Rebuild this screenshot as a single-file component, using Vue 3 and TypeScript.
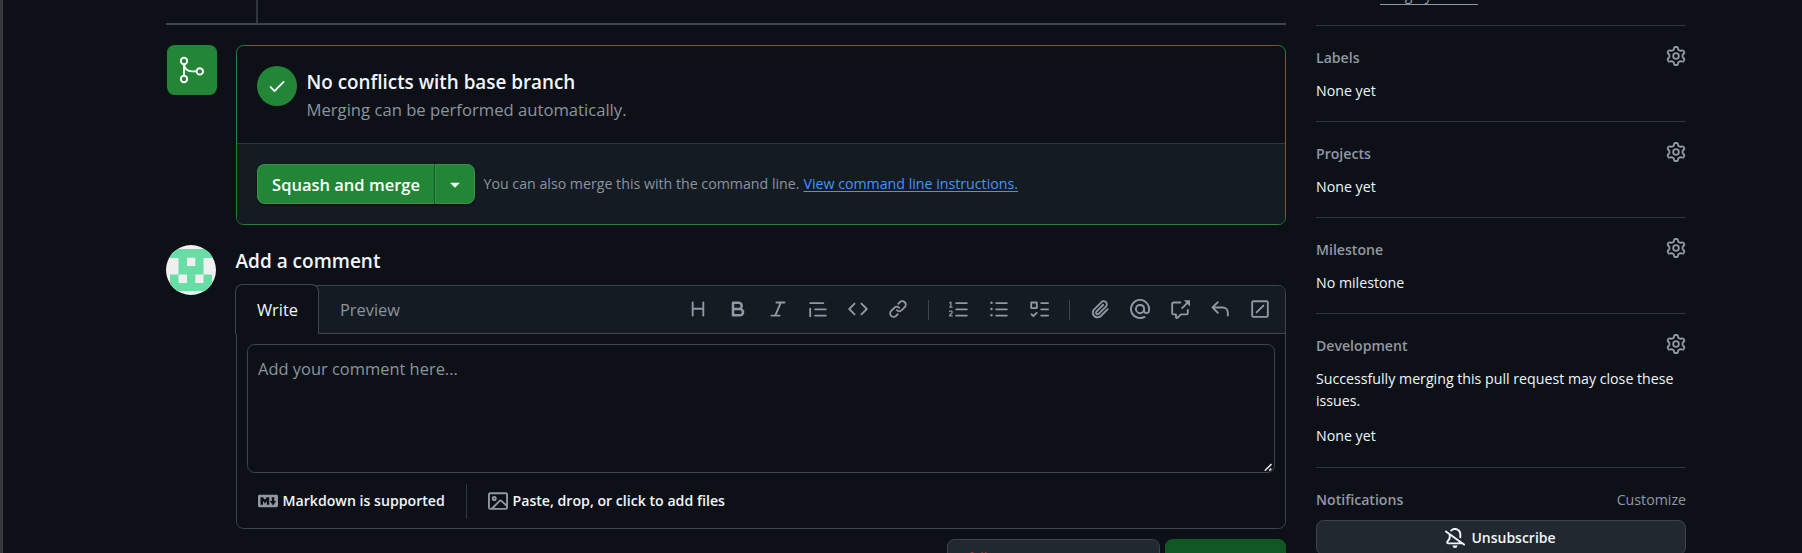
<script setup lang="ts">
interface Section {
  title: string
  lines: string[]
}

const tools: string[][] = [
  [
    'M3.75 2a.75.75 0 0 1 .75.75V7h7V2.75a.75.75 0 0 1 1.5 0v10.5a.75.75 0 0 1-1.5 0V8.5h-7v4.75a.75.75 0 0 1-1.5 0V2.75A.75.75 0 0 1 3.75 2Z',
    'M4 2h4.5a3.501 3.501 0 0 1 2.852 5.53A3.499 3.499 0 0 1 9.5 14H4a1 1 0 0 1-1-1V3a1 1 0 0 1 1-1Zm1 7v3h4.5a1.5 1.5 0 0 0 0-3Zm3.5-2a1.5 1.5 0 0 0 0-3H5v3Z',
    'M6 2.75A.75.75 0 0 1 6.75 2h6.5a.75.75 0 0 1 0 1.5h-2.505l-3.858 9H9.25a.75.75 0 0 1 0 1.5h-6.5a.75.75 0 0 1 0-1.5h2.505l3.858-9H6.75A.75.75 0 0 1 6 2.75Z',
    'M1.75 2.5h10.5a.75.75 0 0 1 0 1.5H1.75a.75.75 0 0 1 0-1.5Zm4 5h8.5a.75.75 0 0 1 0 1.5h-8.5a.75.75 0 0 1 0-1.5Zm0 5h8.5a.75.75 0 0 1 0 1.5h-8.5a.75.75 0 0 1 0-1.5ZM2.5 7.75v6a.75.75 0 0 1-1.5 0v-6a.75.75 0 0 1 1.5 0Z',
    'm11.28 3.22 4.25 4.25a.75.75 0 0 1 0 1.06l-4.25 4.25a.749.749 0 0 1-1.275-.326.749.749 0 0 1 .215-.734L13.94 8l-3.72-3.72a.749.749 0 0 1 .326-1.275.749.749 0 0 1 .734.215Zm-6.56 0a.751.751 0 0 1 1.042.018.751.751 0 0 1 .018 1.042L2.06 8l3.72 3.72a.749.749 0 0 1-.326 1.275.749.749 0 0 1-.734-.215L.47 8.53a.75.75 0 0 1 0-1.06Z',
    'm7.775 3.275 1.25-1.25a3.5 3.5 0 1 1 4.95 4.95l-2.5 2.5a3.5 3.5 0 0 1-4.95 0 .751.751 0 0 1 .018-1.042.751.751 0 0 1 1.042-.018 1.998 1.998 0 0 0 2.83 0l2.5-2.5a2.002 2.002 0 0 0-2.83-2.83l-1.25 1.25a.751.751 0 0 1-1.042-.018.751.751 0 0 1-.018-1.042Zm-4.69 9.64a1.998 1.998 0 0 0 2.83 0l1.25-1.25a.751.751 0 0 1 1.042.018.751.751 0 0 1 .018 1.042l-1.25 1.25a3.5 3.5 0 1 1-4.95-4.95l2.5-2.5a3.5 3.5 0 0 1 4.95 0 .751.751 0 0 1-.018 1.042.751.751 0 0 1-1.042.018 1.998 1.998 0 0 0-2.83 0l-2.5 2.5a1.998 1.998 0 0 0 0 2.83Z',
  ],
  [
    'M5 3.25a.75.75 0 0 1 .75-.75h8.5a.75.75 0 0 1 0 1.5h-8.5A.75.75 0 0 1 5 3.25Zm0 5a.75.75 0 0 1 .75-.75h8.5a.75.75 0 0 1 0 1.5h-8.5A.75.75 0 0 1 5 8.25Zm0 5a.75.75 0 0 1 .75-.75h8.5a.75.75 0 0 1 0 1.5h-8.5a.75.75 0 0 1-.75-.75ZM.924 10.32a.5.5 0 0 1-.851-.525l.001-.001.001-.002.002-.004.007-.011c.097-.144.215-.273.348-.384.228-.19.588-.392 1.068-.392.468 0 .858.181 1.126.484.259.294.377.673.377 1.038 0 .987-.686 1.495-1.156 1.845l-.047.035c-.303.225-.522.4-.654.597h1.357a.5.5 0 0 1 0 1H.5a.5.5 0 0 1-.5-.5c0-1.005.692-1.52 1.167-1.875l.035-.025c.531-.396.8-.625.8-1.078a.57.57 0 0 0-.128-.376C1.806 10.068 1.695 10 1.5 10a.658.658 0 0 0-.429.163.835.835 0 0 0-.144.153ZM2.003 2.5V6h.503a.5.5 0 0 1 0 1H.5a.5.5 0 0 1 0-1h.503V3.308l-.28.14a.5.5 0 0 1-.446-.895l1.003-.5a.5.5 0 0 1 .723.447Z',
    'M5.75 2.5h8.5a.75.75 0 0 1 0 1.5h-8.5a.75.75 0 0 1 0-1.5Zm0 5h8.5a.75.75 0 0 1 0 1.5h-8.5a.75.75 0 0 1 0-1.5Zm0 5h8.5a.75.75 0 0 1 0 1.5h-8.5a.75.75 0 0 1 0-1.5ZM2 14a1 1 0 1 1 0-2 1 1 0 0 1 0 2Zm1-6a1 1 0 1 1-2 0 1 1 0 0 1 2 0ZM2 4a1 1 0 1 1 0-2 1 1 0 0 1 0 2Z',
    'M2 2h4a1 1 0 0 1 1 1v4a1 1 0 0 1-1 1H2a1 1 0 0 1-1-1V3a1 1 0 0 1 1-1Zm4.655 8.595a.75.75 0 0 1 0 1.06L4.03 14.28a.75.75 0 0 1-1.06 0l-1.5-1.5a.749.749 0 0 1 .326-1.275.749.749 0 0 1 .734.215l.97.97 2.095-2.095a.75.75 0 0 1 1.06 0ZM9.75 2.5h5.5a.75.75 0 0 1 0 1.5h-5.5a.75.75 0 0 1 0-1.5Zm0 5h5.5a.75.75 0 0 1 0 1.5h-5.5a.75.75 0 0 1 0-1.5Zm0 5h5.5a.75.75 0 0 1 0 1.5h-5.5a.75.75 0 0 1 0-1.5Zm-7.25-9v3h3v-3Z',
  ],
  [
    'M12.212 3.02a1.753 1.753 0 0 0-2.478.003l-5.83 5.83a3.007 3.007 0 0 0-.88 2.127c0 .795.315 1.551.88 2.116.567.567 1.333.89 2.126.89.79 0 1.548-.321 2.116-.89l5.48-5.48a.75.75 0 0 1 1.061 1.06l-5.48 5.48a4.492 4.492 0 0 1-3.177 1.33c-1.2 0-2.345-.487-3.187-1.33a4.483 4.483 0 0 1-1.32-3.177c0-1.195.475-2.341 1.32-3.186l5.83-5.83a3.25 3.25 0 0 1 5.553 2.297c0 .863-.343 1.691-.953 2.301L7.439 12.39c-.375.377-.884.59-1.416.593a1.998 1.998 0 0 1-1.412-.593 1.992 1.992 0 0 1 0-2.828l5.48-5.48a.751.751 0 0 1 1.042.018.751.751 0 0 1 .018 1.042l-5.48 5.48a.492.492 0 0 0 0 .707.499.499 0 0 0 .352.154.51.51 0 0 0 .356-.154l5.833-5.827a1.755 1.755 0 0 0 0-2.481Z',
    'M4.75 2.37a6.501 6.501 0 0 0 6.5 11.26.75.75 0 0 1 .75 1.298A7.999 7.999 0 0 1 .989 4.148 8 8 0 0 1 16 7.75v1.5a2.75 2.75 0 0 1-5.072 1.475 3.999 3.999 0 0 1-6.65-4.19A4 4 0 0 1 12 8v1.25a1.25 1.25 0 0 0 2.5 0V7.867a6.5 6.5 0 0 0-9.75-5.496ZM10.5 8a2.5 2.5 0 1 0-5 0 2.5 2.5 0 0 0 5 0Z',
    'M2.75 3.5a.25.25 0 0 0-.25.25v7.5c0 .138.112.25.25.25h2a.75.75 0 0 1 .75.75v2.19l2.72-2.72a.749.749 0 0 1 .53-.22h4.5a.25.25 0 0 0 .25-.25v-2.5a.75.75 0 0 1 1.5 0v2.5A1.75 1.75 0 0 1 13.25 13H9.06l-2.573 2.573A1.458 1.458 0 0 1 4 14.543V13H2.75A1.75 1.75 0 0 1 1 11.25v-7.5C1 2.784 1.784 2 2.75 2h5.5a.75.75 0 0 1 0 1.5ZM16 1.25v4.146a.25.25 0 0 1-.427.177L14.03 4.03l-3.75 3.75a.749.749 0 0 1-1.275-.326.749.749 0 0 1 .215-.734l3.75-3.75-1.543-1.543A.25.25 0 0 1 11.604 1h4.146a.25.25 0 0 1 .25.25Z',
    'M6.78 1.97a.75.75 0 0 1 0 1.06L3.81 6h6.44A4.75 4.75 0 0 1 15 10.75v2.5a.75.75 0 0 1-1.5 0v-2.5a3.25 3.25 0 0 0-3.25-3.25H3.81l2.97 2.97a.749.749 0 0 1-.326 1.275.749.749 0 0 1-.734-.215L1.47 7.28a.75.75 0 0 1 0-1.06l4.25-4.25a.75.75 0 0 1 1.06 0Z',
    'M13.25 1c.966 0 1.75.784 1.75 1.75v10.5A1.75 1.75 0 0 1 13.25 15H2.75A1.75 1.75 0 0 1 1 13.25V2.75C1 1.784 1.784 1 2.75 1ZM2.75 2.5a.25.25 0 0 0-.25.25v10.5c0 .138.112.25.25.25h10.5a.25.25 0 0 0 .25-.25V2.75a.25.25 0 0 0-.25-.25Zm8.53 3.28-5.5 5.5a.75.75 0 0 1-1.06-1.06l5.5-5.5a.75.75 0 0 1 1.06 1.06Z',
  ],
]

const gear =
  'M8 0a8.2 8.2 0 0 1 .701.031C9.444.095 9.99.645 10.16 1.29l.288 1.107c.018.066.079.158.212.224.231.114.454.243.668.386.123.082.233.09.299.071l1.103-.303c.644-.176 1.392.021 1.82.63.27.385.506.792.704 1.218.315.675.111 1.422-.364 1.891l-.814.806c-.049.048-.098.147-.088.294.016.257.016.515 0 .772-.01.147.038.246.088.294l.814.806c.475.469.679 1.216.364 1.891a7.977 7.977 0 0 1-.704 1.217c-.428.61-1.176.807-1.82.63l-1.102-.302c-.067-.019-.177-.011-.3.071a5.909 5.909 0 0 1-.668.386c-.133.066-.194.158-.211.224l-.29 1.106c-.168.646-.715 1.196-1.458 1.26a8.006 8.006 0 0 1-1.402 0c-.743-.064-1.289-.614-1.458-1.26l-.289-1.106c-.018-.066-.079-.158-.212-.224a5.738 5.738 0 0 1-.668-.386c-.123-.082-.233-.09-.299-.071l-1.103.303c-.644.176-1.392-.021-1.82-.63a8.12 8.12 0 0 1-.704-1.218c-.315-.675-.111-1.422.363-1.891l.815-.806c.05-.048.098-.147.088-.294a6.214 6.214 0 0 1 0-.772c.01-.147-.038-.246-.088-.294l-.815-.806C.635 6.045.431 5.298.746 4.623a7.92 7.92 0 0 1 .704-1.217c.428-.61 1.176-.807 1.82-.63l1.102.302c.067.019.177.011.3-.071.214-.143.437-.272.668-.386.133-.066.194-.158.211-.224l.29-1.106C6.009.645 6.556.095 7.299.03 7.53.01 7.764 0 8 0Zm-.571 1.525c-.036.003-.108.036-.137.146l-.289 1.105c-.147.561-.549.967-.998 1.189-.173.086-.34.183-.5.29-.417.278-.97.423-1.529.27l-1.103-.303c-.109-.03-.175.016-.195.045-.22.312-.412.644-.573.99-.014.031-.021.11.059.19l.815.806c.411.406.562.957.53 1.456a4.709 4.709 0 0 0 0 .582c.032.499-.119 1.05-.53 1.456l-.815.806c-.081.08-.073.159-.059.19.162.346.353.677.573.989.02.03.085.076.195.046l1.102-.303c.56-.153 1.113-.008 1.53.27.161.107.328.204.501.29.447.222.85.629.997 1.189l.289 1.105c.029.109.101.143.137.146a6.6 6.6 0 0 0 1.142 0c.036-.003.108-.036.137-.146l.289-1.105c.147-.561.549-.967.998-1.189.173-.086.34-.183.5-.29.417-.278.97-.423 1.529-.27l1.103.303c.109.029.175-.016.195-.045.22-.313.411-.644.573-.99.014-.031.021-.11-.059-.19l-.815-.806c-.411-.406-.562-.957-.53-1.456a4.709 4.709 0 0 0 0-.582c-.032-.499.119-1.05.53-1.456l.815-.806c.081-.08.073-.159.059-.19a6.464 6.464 0 0 0-.573-.989c-.02-.03-.085-.076-.195-.046l-1.102.303c-.56.153-1.113.008-1.53-.27a4.44 4.44 0 0 0-.501-.29c-.447-.222-.85-.629-.997-1.189l-.289-1.105c-.029-.11-.101-.143-.137-.146a6.6 6.6 0 0 0-1.142 0ZM11 8a3 3 0 1 1-6 0 3 3 0 0 1 6 0ZM9.5 8a1.5 1.5 0 1 0-3.001.001A1.5 1.5 0 0 0 9.5 8Z'

const sections: Section[] = [
  { title: 'Labels', lines: ['None yet'] },
  { title: 'Projects', lines: ['None yet'] },
  { title: 'Milestone', lines: ['No milestone'] },
  {
    title: 'Development',
    lines: ['Successfully merging this pull request may close these issues.', 'None yet'],
  },
]
</script>

<template>
  <div class="page">
    <main class="main">
      <div class="timeline-end"></div>

      <section class="row merge-row">
        <div class="merge-badge">
          <svg width="30" height="30" viewBox="0 0 30 30" fill="none" stroke="#fff" stroke-width="1.9">
            <circle cx="7" cy="6" r="3.2" />
            <circle cx="7" cy="24" r="3.2" />
            <circle cx="22.8" cy="16.4" r="3.2" />
            <path d="M7 9.2V20.8M7 9.2c.6 4.6 3.6 7.2 8 7.2h4.6" />
          </svg>
        </div>
        <div class="merge-box">
          <div class="merge-status">
            <div class="ok">
              <svg class="icon" viewBox="0 0 16 16"><path d="M13.78 4.22a.75.75 0 0 1 0 1.06l-7.25 7.25a.75.75 0 0 1-1.06 0L2.22 9.28a.751.751 0 0 1 .018-1.042.751.751 0 0 1 1.042-.018L6 10.94l6.72-6.72a.75.75 0 0 1 1.06 0Z" /></svg>
            </div>
            <div>
              <h3 class="status-title">No conflicts with base branch</h3>
              <p class="status-sub">Merging can be performed automatically.</p>
            </div>
          </div>
          <div class="merge-actions">
            <div class="btn-group">
              <button class="btn-merge" type="button"><span>Squash and merge</span></button>
              <button class="btn-caret" type="button">
                <svg class="icon" viewBox="0 0 16 16"><path d="m4.427 7.427 3.396 3.396a.25.25 0 0 0 .354 0l3.396-3.396A.25.25 0 0 0 11.396 7H4.604a.25.25 0 0 0-.177.427Z" /></svg>
              </button>
            </div>
            <p class="hint"><span>You can also merge this with the command line.</span><a class="hint-link">View command line instructions.</a></p>
          </div>
        </div>
      </section>

      <section class="row comment-row">
        <svg class="avatar" width="50" height="50" viewBox="0 0 50 50">
          <defs><clipPath id="round"><circle cx="25" cy="25" r="25" /></clipPath></defs>
          <g clip-path="url(#round)">
            <rect width="50" height="50" fill="#f0f0f0" />
            <path fill="#68dda5" d="M4 4h42v9H4zM12.5 12.8h25v17h-25zM4 29.5h42V46H4z" />
            <path fill="#f0f0f0" d="M21 12.8h8.3v8.3H21zM12.5 29.5H21V38h-8.5zM29.3 29.5h8.2V38h-8.2z" />
          </g>
        </svg>
        <div class="comment">
          <h3 class="comment-title">Add a comment</h3>
          <div class="editor">
            <div class="tabs">
              <div class="tab-write"><span>Write</span></div>
              <div class="tab-preview"><span>Preview</span></div>
              <div class="toolbar">
                <template v-for="(group, g) in tools" :key="g">
                  <i v-if="g > 0" class="sep"></i>
                  <span v-for="(d, i) in group" :key="i" class="tool">
                    <svg class="icon" viewBox="0 0 16 16"><path :d="d" /></svg>
                  </span>
                </template>
              </div>
            </div>
            <div class="input">
              <span>Add your comment here...</span>
              <svg class="grip" width="9" height="9" viewBox="0 0 9 9" stroke="#e6e6e6" stroke-width="1.5"><path d="M.8 7.8 7.5 1.1M5.3 7.6l2-2" /></svg>
            </div>
            <div class="editor-foot">
              <svg class="icon" viewBox="0 0 16 16"><path d="M14.85 3c.63 0 1.15.52 1.14 1.15v7.7c0 .63-.51 1.15-1.15 1.15H1.15C.52 13 0 12.48 0 11.84V4.15C0 3.52.52 3 1.15 3ZM9 11V5H7L5.5 7 4 5H2v6h2V8l1.5 1.92L7 8v3Zm2.99.5L14.5 8H13V5h-2v3H9.5Z" /></svg>
              <span class="foot-md">Markdown is supported</span>
              <i class="foot-sep"></i>
              <svg class="icon" viewBox="0 0 16 16"><path d="M16 13.25A1.75 1.75 0 0 1 14.25 15H1.75A1.75 1.75 0 0 1 0 13.25V2.75C0 1.784.784 1 1.75 1h12.5c.966 0 1.75.784 1.75 1.75ZM1.75 2.5a.25.25 0 0 0-.25.25v10.5c0 .138.112.25.25.25h.94l.03-.03 6.077-6.078a1.75 1.75 0 0 1 2.412-.06L14.5 10.31V2.75a.25.25 0 0 0-.25-.25Zm12.5 11a.25.25 0 0 0 .25-.25v-.917l-4.298-3.889a.25.25 0 0 0-.344.009L4.81 13.5ZM7 6a2 2 0 1 1-3.999.001A2 2 0 0 1 7 6ZM5.5 6a.5.5 0 1 0-1 0 .5.5 0 0 0 1 0Z" /></svg>
              <span>Paste, drop, or click to add files</span>
            </div>
          </div>
          <div class="form-actions">
            <button class="btn-close" type="button">
              <svg class="icon" viewBox="0 0 16 16"><path d="M3.25 1A2.25 2.25 0 0 1 4 5.372v5.256a2.251 2.251 0 1 1-1.5 0V5.372A2.251 2.251 0 0 1 3.25 1Zm9.5 5.5a.75.75 0 0 1 .75.75v3.378a2.251 2.251 0 1 1-1.5 0V7.25a.75.75 0 0 1 .75-.75Zm-2.03-5.273a.75.75 0 0 1 1.06 0l.97.97.97-.97a.75.75 0 1 1 1.06 1.06l-.97.97.97.97a.75.75 0 0 1-1.06 1.06l-.97-.97-.97.97a.75.75 0 0 1-1.06-1.06l.97-.97-.97-.97a.75.75 0 0 1 0-1.06Z" /></svg>
            </button>
            <button class="btn-comment" type="button"></button>
          </div>
        </div>
      </section>
    </main>

    <aside class="side">
      <div class="assignees"><span class="assign-link">assign yourself</span></div>
      <section v-for="s in sections" :key="s.title" class="side-item">
        <header class="side-head">
          <span class="side-title">{{ s.title }}</span>
          <svg class="icon" viewBox="0 0 16 16"><path :d="gear" /></svg>
        </header>
        <p v-for="line in s.lines" :key="line" class="side-text">{{ line }}</p>
      </section>
      <section class="side-item notifications">
        <header class="side-head">
          <span class="side-title">Notifications</span>
          <span class="customize">Customize</span>
        </header>
        <button class="btn-unsub" type="button">
          <svg class="icon" viewBox="0 0 16 16"><path d="m4.182 4.31.016.011 10.104 7.316.013.01 1.375.996a.75.75 0 1 1-.88 1.214L13.626 13H2.518a1.516 1.516 0 0 1-1.263-2.36l1.703-2.554A.255.255 0 0 0 3 7.947V5.305L.31 3.357a.75.75 0 1 1 .88-1.214Zm7.373 7.19L4.5 6.391v1.556c0 .346-.102.683-.294.97l-1.703 2.556a.017.017 0 0 0-.003.01c0 .005.002.009.005.012l.006.004.007.001ZM8 1.5c-.997 0-1.895.416-2.534 1.086A.75.75 0 1 1 4.38 1.55 5 5 0 0 1 13 5v2.373a.75.75 0 0 1-1.5 0V5A3.5 3.5 0 0 0 8 1.5ZM8 16a2 2 0 0 1-1.985-1.75c-.017-.137.097-.25.235-.25h3.5c.138 0 .252.113.235.25A2 2 0 0 1 8 16Z" /></svg>
          <span>Unsubscribe</span>
        </button>
      </section>
    </aside>
  </div>
</template>

<style>
html,
body {
  margin: 0;
  background: #0d1117;
  overflow: hidden;
}
</style>

<style scoped>
.page {
  box-sizing: border-box;
  display: flex;
  gap: 30px;
  width: 1802px;
  height: 553px;
  padding-left: 163px;
  border-left: 3px solid #35383c;
  overflow: hidden;
  background: #0d1117;
  color: #f0f6fc;
  font-family: "Open Sans", "Noto Sans", sans-serif;
  font-size: 14.1px;
  line-height: 22px;
}
.page * {
  box-sizing: border-box;
}
h3,
p {
  margin: 0;
  white-space: nowrap;
}
button {
  margin: 0;
  font-family: inherit;
}
.icon {
  display: block;
  flex: none;
  width: 20px;
  height: 20px;
  fill: currentColor;
}
.main {
  flex: none;
  width: 1120px;
}
.timeline-end {
  height: 25px;
  border-bottom: 2px solid #3d444d;
  background: linear-gradient(#30363d, #30363d) 90px 0 / 2px 100% no-repeat;
}
.row {
  display: flex;
}
.merge-row {
  margin-top: 20px;
}
.merge-badge {
  display: flex;
  align-items: center;
  justify-content: center;
  flex: none;
  width: 50px;
  height: 50px;
  margin: 0 19px 0 1px;
  border-radius: 7.5px;
  background: #238636;
}
.merge-box {
  flex: 1;
  height: 180px;
  border: 1px solid #2b7f3a;
  border-radius: 7.5px;
  overflow: hidden;
}
.merge-status {
  display: flex;
  gap: 9.5px;
  height: 98px;
  padding: 20px;
  border-bottom: 1px solid #30363d;
}
.ok {
  display: flex;
  align-items: center;
  justify-content: center;
  flex: none;
  width: 40px;
  height: 40px;
  border-radius: 50%;
  background: #238636;
}
.status-title {
  margin-top: 1px;
  font-size: 18.85px;
  line-height: 30px;
  font-weight: 600;
}
.status-sub {
  font-size: 16.65px;
  line-height: 26px;
  color: #8b949e;
}
.merge-actions {
  display: flex;
  align-items: center;
  gap: 8.5px;
  height: 80px;
  padding: 0 20px;
  background: #151b23;
}
.btn-group {
  display: flex;
  width: 218px;
  height: 40px;
}
.btn-merge,
.btn-caret {
  display: flex;
  align-items: center;
  justify-content: center;
  padding: 0;
  border: 1px solid #3a9249;
  background: #238636;
  color: #fff;
  font-size: 16.5px;
  font-weight: 600;
  box-shadow: 0 1px 2px rgba(1, 4, 9, 0.6);
}
.btn-merge {
  width: 178px;
  border-right-color: #1b6a2b;
  border-radius: 7.5px 0 0 7.5px;
}
.btn-caret {
  width: 40px;
  border-radius: 0 7.5px 7.5px 0;
}
.hint {
  display: flex;
  gap: 4px;
  color: #8b949e;
  font-size: 14.2px;
}
.hint-link {
  color: #4493f8;
  text-decoration: underline;
  text-underline-offset: 2px;
}
.comment-row {
  margin-top: 20px;
}
.avatar {
  flex: none;
  margin-right: 20px;
}
.comment {
  flex: 1;
}
.comment-title {
  height: 40px;
  padding-top: 2px;
  font-size: 19px;
  line-height: 28px;
  font-weight: 600;
  text-indent: -0.5px;
}
.editor {
  height: 244px;
  border: 1px solid #3d444d;
  border-radius: 7.5px;
}
.tabs {
  display: flex;
  height: 48px;
  border-bottom: 1px solid #3d444d;
  border-radius: 6.5px 6.5px 0 0;
  background: #151b23;
  font-size: 16.4px;
}
.tab-write {
  display: flex;
  align-items: center;
  justify-content: center;
  flex: none;
  width: 84px;
  height: 50px;
  margin: -2px 0 0 -2px;
  padding-left: 1px;
  border: 1px solid #3d444d;
  border-bottom: 0;
  border-radius: 7.5px 7.5px 0 0;
  background: #0d1117;
}
.tab-preview {
  display: flex;
  align-items: center;
  padding-left: 21px;
  color: #8b949e;
}
.toolbar {
  display: flex;
  align-items: center;
  margin-left: auto;
  margin-right: 5px;
  color: #9198a1;
}
.tool {
  display: flex;
  justify-content: center;
  width: 40px;
  margin-top: -1px;
}
.sep {
  width: 1px;
  height: 20px;
  margin: 0 10px;
  background: #3d444d;
}
.input {
  position: relative;
  height: 129px;
  margin: 10px 10px 0;
  padding: 11px 10px;
  border: 1px solid #3d444d;
  border-radius: 7.5px;
  color: #8b949e;
  font-size: 16.45px;
  line-height: 26px;
}
.grip {
  position: absolute;
  right: 1px;
  bottom: 0;
}
.editor-foot {
  display: flex;
  align-items: center;
  height: 56px;
  padding-left: 20.5px;
  color: #9198a1;
  font-size: 14.15px;
  font-weight: 600;
  white-space: nowrap;
}
.editor-foot span {
  margin-left: 5px;
  color: #f0f6fc;
}
.foot-md {
  width: 162px;
}
.foot-sep {
  width: 1px;
  height: 35px;
  margin: 0 21px;
  background: #30363d;
}
.form-actions {
  display: flex;
  justify-content: flex-end;
  gap: 5px;
  margin-top: 10px;
}
.form-actions button {
  display: flex;
  align-items: center;
  height: 40px;
  border-radius: 7.5px;
}
.btn-close {
  width: 213px;
  padding: 3px 0 0 20px;
  border: 1px solid #3d444d;
  background: #212830;
}
.btn-close .icon {
  color: #da3633;
}
.btn-comment {
  width: 121px;
  border: 1px solid #105823;
  background: #105823;
}
.side {
  flex: none;
  width: 370px;
}
.assignees {
  height: 25px;
  padding-left: 64px;
  overflow: hidden;
}
.assign-link {
  display: block;
  width: 98px;
  height: 20px;
  margin-top: -15px;
  border-bottom: 1px solid #9198a1;
  color: #9198a1;
  line-height: 20px;
  white-space: nowrap;
}
.side-item {
  padding: 20px 0 12px;
  border-top: 1px solid #30363d;
}
.notifications {
  margin-top: 1px;
}
.side-head {
  display: flex;
  justify-content: space-between;
  height: 30px;
  color: #9198a1;
}
.side-title,
.customize {
  padding-top: 1px;
  font-weight: 600;
}
.customize {
  font-size: 14.2px;
  font-weight: 400;
}
.side-text {
  margin-top: 4px;
  padding-bottom: 7px;
  font-size: 14.2px;
  white-space: normal;
}
.side-text + .side-text {
  margin-top: 6px;
}
.btn-unsub {
  display: flex;
  align-items: center;
  justify-content: center;
  gap: 6px;
  width: 370px;
  height: 35px;
  margin-top: 2px;
  padding: 0 1px 0 0;
  border: 1px solid #3d444d;
  border-radius: 7.5px;
  background: #212830;
  color: #f0f6fc;
  font-size: 14px;
  font-weight: 600;
}
</style>
